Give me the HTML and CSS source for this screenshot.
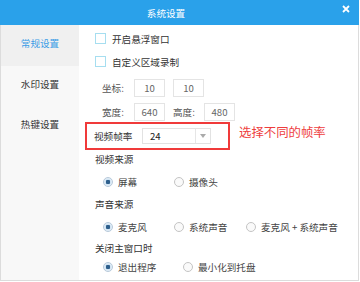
FILE: index.html
```html
<!DOCTYPE html>
<html lang="zh-CN">
<head>
  <meta charset="UTF-8" />
  <title>系统设置</title>
  <link rel="stylesheet" href="styles.css">
</head>
<body>
  <div class="dialog">
    <div class="titlebar">
      <span class="title">系统设置</span>
      <span class="close">
        <svg width="8" height="8" viewBox="0 0 8 8"><path d="M1 1L7 7M7 1L1 7" stroke="#fff" stroke-width="1.8"/></svg>
      </span>
    </div>

    <div class="main">
      <ul class="nav">
        <li class="active">常规设置</li>
        <li>水印设置</li>
        <li>热键设置</li>
      </ul>

      <div class="content">
        <label class="check-row"><span class="checkbox"></span>开启悬浮窗口</label>
        <label class="check-row"><span class="checkbox"></span>自定义区域录制</label>

        <div class="field-row first">
          <span class="field-label">坐标:</span>
          <span class="num-input">10</span>
          <span class="num-input">10</span>
        </div>
        <div class="field-row">
          <span class="field-label">宽度:</span>
          <span class="num-input">640</span>
          <span class="field-label small">高度:</span>
          <span class="num-input">480</span>
        </div>

        <div class="frame-wrap">
          <div class="frame-row">
            <span class="frame-label">视频帧率</span>
            <span class="select"><span class="select-value">24</span><span class="select-arrow"></span></span>
          </div>
          <span class="note">选择不同的帧率</span>
        </div>

        <div class="group-label">视频来源</div>
        <div class="radio-row">
          <span class="radio-item"><span class="radio checked"></span>屏幕</span>
          <span class="radio-item"><span class="radio"></span>摄像头</span>
        </div>

        <div class="group-label">声音来源</div>
        <div class="radio-row">
          <span class="radio-item"><span class="radio checked"></span>麦克风</span>
          <span class="radio-item wide"><span class="radio"></span>系统声音</span>
          <span class="radio-item"><span class="radio"></span>麦克风 + 系统声音</span>
        </div>

        <div class="group-label last">关闭主窗口时</div>
        <div class="radio-row last">
          <span class="radio-item exit"><span class="radio checked"></span>退出程序</span>
          <span class="radio-item"><span class="radio"></span>最小化到托盘</span>
        </div>
      </div>
    </div>
  </div>
</body>
</html>
```

FILE: styles.css
```css
:root {
  --blue: #2aa1ea;
  --border: #dcdcdc;
  --text: #333;
}

* {
  box-sizing: border-box;
  margin: 0;
  padding: 0;
}

body {
  font-family: "Noto Sans CJK SC", "Noto Sans", sans-serif;
  font-size: 9.6px;
  line-height: 14px;
  color: var(--text);
  background: #fff;
}

.dialog {
  width: 359px;
  height: 281px;
  display: flex;
  flex-direction: column;
}

.titlebar {
  height: 25px;
  background: var(--blue);
  display: flex;
  align-items: center;
  color: #fff;
}

.title {
  flex: 1;
  text-align: center;
}

.close {
  width: 27px;
  display: flex;
  justify-content: center;
  padding-bottom: 7px;
}

.main {
  flex: 1;
  display: flex;
  border: 1px solid var(--border);
  border-top: none;
}

.nav {
  list-style: none;
  width: 78px;
  background: #f8f8f8;
}

.nav li {
  height: 40px;
  line-height: 36px;
  text-align: center;
}

.nav li.active {
  background: #f0f0f0;
  color: #3b9de6;
  height: 41px;
}

.content {
  flex: 1;
  padding: 2px 0 0 16px;
  background: #fff;
}

.check-row {
  height: 23px;
  display: flex;
  align-items: center;
}

.checkbox {
  width: 11px;
  height: 11px;
  border: 1px solid #a6def0;
  margin-right: 6px;
}

.field-row {
  height: 24px;
  display: flex;
  align-items: center;
  padding-left: 7px;
  color: #555;
}

.field-row.first {
  margin-top: 2px;
  height: 25px;
}

.field-label {
  width: 32px;
}

.field-label.small {
  width: 31px;
}

.num-input {
  width: 31px;
  height: 18px;
  line-height: 16px;
  border: 1px solid #e4e4e4;
  text-align: center;
  margin-right: 8px;
  color: #666;
}

.frame-wrap {
  display: flex;
  align-items: flex-start;
  height: 24px;
}

.frame-row {
  width: 141px;
  height: 24px;
  margin-left: -8px;
  padding-left: 7px;
  display: flex;
  align-items: center;
  outline: 2px solid #f03a3a;
}

.frame-label {
  width: 48px;
}

.select {
  width: 69px;
  height: 16px;
  border: 1px solid #e2e2e2;
  display: flex;
}

.select-value {
  flex: 1;
  padding-left: 7px;
  color: #222;
}

.select-arrow {
  width: 15px;
  border-left: 1px solid #e6e6e6;
  position: relative;
}

.select-arrow::after {
  content: "";
  position: absolute;
  left: 4px;
  top: 5px;
  border-left: 3px solid transparent;
  border-right: 3px solid transparent;
  border-top: 4px solid #aaa;
}

.note {
  margin-left: 11px;
  font-size: 12.4px;
  line-height: 16px;
  color: #ee3d3d;
}

.group-label {
  height: 22px;
  display: flex;
  align-items: center;
}

.group-label.last {
  height: 20px;
}

.radio-row {
  height: 23px;
  display: flex;
  align-items: center;
  padding-left: 8px;
  color: #444;
}

.radio-row.last {
  height: 18px;
}

.radio-item {
  min-width: 71px;
  display: flex;
  align-items: center;
}

.radio-item.wide {
  min-width: 72px;
}

.radio-item.exit {
  min-width: 80px;
}

.radio {
  width: 10px;
  height: 10px;
  border-radius: 50%;
  border: 1px solid #c4c4c4;
  background: #fafafa;
  margin-right: 5px;
}

.radio.checked {
  border-color: #b7c9da;
  background: radial-gradient(circle, #2e5f8c 0, #2e5f8c 2px, #cfe3f3 2.5px, #e6f0f8 4px);
}
```
